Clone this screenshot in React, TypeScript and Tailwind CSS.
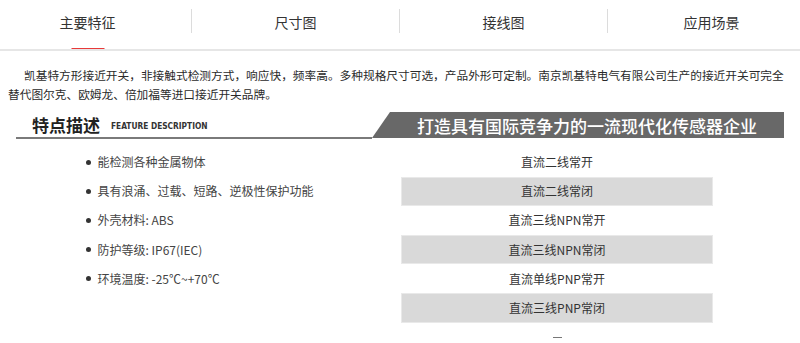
import React from "react";

const tabs = ["主要特征", "尺寸图", "接线图", "应用场景"];
const features = [
  "能检测各种金属物体",
  "具有浪涌、过载、短路、逆极性保护功能",
  "外壳材料: ABS",
  "防护等级: IP67(IEC)",
  "环境温度: -25℃~+70℃",
];
const types = [
  "直流二线常开",
  "直流二线常闭",
  "直流三线NPN常开",
  "直流三线NPN常闭",
  "直流单线PNP常开",
  "直流三线PNP常闭",
];

export default function App() {
  return (
    <div
      className="w-[800px] h-[343px] overflow-hidden bg-white text-[#333]"
      style={{ fontFamily: '"Noto Sans CJK SC", "Noto Sans", sans-serif' }}
    >
      {/* Tabs */}
      <div className="h-[51px] border-b-2 border-[#e6e6e6] overflow-hidden">
        <div className="flex h-[49px] ml-[-16px]">
          {tabs.map((t, i) => (
            <React.Fragment key={t}>
              <div className="relative shrink-0 w-[207px] h-full flex items-center justify-center pb-[4px] text-[14px] text-[#333]">
                {t}
                {i === 0 && (
                  <div className="absolute bottom-[-1px] left-1/2 -translate-x-1/2 w-[33px] h-[2px] bg-[#e83a3a]" />
                )}
              </div>
              {i < tabs.length - 1 && (
                <div className="shrink-0 w-px h-[24px] mt-[9px] bg-[#dcdcdc]" />
              )}
            </React.Fragment>
          ))}
        </div>
      </div>

      {/* Intro paragraph */}
      <p className="mt-[14px] px-[8px] text-[11.7px] leading-[19px] text-[#2a2a2a] indent-[16px]">
        凯基特方形接近开关，非接触式检测方式，响应快，频率高。多种规格尺寸可选，产品外形可定制。南京凯基特电气有限公司生产的接近开关可完全
        <br />
        替代图尔克、欧姆龙、倍加福等进口接近开关品牌。
      </p>

      {/* Section header */}
      <div className="mt-[9px] ml-[16px] w-[768px] h-[27px] flex">
        <div className="flex-1 border-b-2 border-[#7a7a7a] flex items-center pl-[16px]">
          <span className="text-[17px] font-bold text-[#222] leading-none">特点描述</span>
          <span
            className="ml-[11px] mt-[3px] text-[8.3px] font-bold text-[#333] leading-none"
            style={{ fontFamily: '"DejaVu Sans Condensed", "DejaVu Sans", sans-serif' }}
          >
            FEATURE DESCRIPTION
          </span>
        </div>
        <div className="shrink-0 w-[412px] h-[26px] bg-[#686868] [clip-path:polygon(18px_0,100%_0,100%_100%,0_100%)] flex items-center justify-center pl-[18px]">
          <span className="text-[17px] font-medium text-white leading-none">
            打造具有国际竞争力的一流现代化传感器企业
          </span>
        </div>
      </div>

      {/* Body */}
      <div className="mt-[8.5px] flex">
        <ul className="ml-[86px] w-[315px] shrink-0">
          {features.map((f) => (
            <li key={f} className="h-[29.2px] flex items-center text-[12px] text-[#444]">
              <span className="w-[5px] h-[5px] rounded-full bg-[#333] mr-[6.5px]" />
              {f}
            </li>
          ))}
        </ul>
        <div className="w-[312px] shrink-0">
          {types.map((t, i) => (
            <div
              key={t}
              className={
                i % 2 === 1
                  ? "h-[29.2px] flex items-center justify-center text-[12px] text-[#333] bg-[#d9d9d9] border border-[#e9e9e9]"
                  : "h-[29.2px] flex items-center justify-center text-[12px] text-[#333]"
              }
            >
              {t}
            </div>
          ))}
          <div className="mt-[14px] mx-auto w-[9px] h-[1px] bg-[#777]" />
        </div>
      </div>
    </div>
  );
}
